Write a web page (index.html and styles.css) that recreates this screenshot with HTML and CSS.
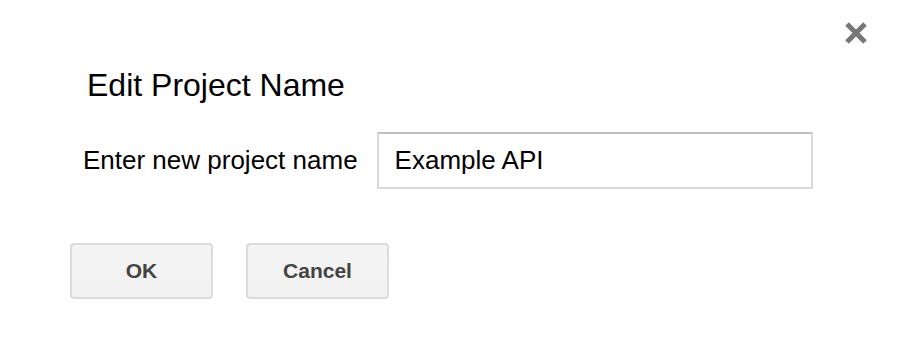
FILE: index.html
```html
<!DOCTYPE html>
<html lang="en">
<head>
  <meta charset="UTF-8" />
  <title>Edit Project Name</title>
  <link rel="stylesheet" href="styles.css">
</head>
<body>
  <div class="dialog">
    <button class="close" type="button" aria-label="Close">
      <svg width="24" height="24" viewBox="0 0 24 24">
        <path d="M3 3L21 21M21 3L3 21" stroke="#777" stroke-width="5" stroke-linecap="butt"/>
      </svg>
    </button>

    <h2 class="title">Edit Project Name</h2>

    <div class="row">
      <label for="projName">Enter new project name</label>
      <input type="text" id="projName" value="Example API">
    </div>

    <div class="actions">
      <button type="button" class="btn">OK</button>
      <button type="button" class="btn">Cancel</button>
    </div>
  </div>
</body>
</html>
```

FILE: styles.css
```css
body {
  margin: 0;
  background: #fff;
  font-family: Arial, "Liberation Sans", sans-serif;
  color: #000;
}
.dialog {
  position: relative;
  width: 898px;
  height: 338px;
  box-sizing: border-box;
  padding: 67px 0 0 70px;
}
.close {
  position: absolute;
  top: 21px;
  left: 844px;
  padding: 0;
  border: 0;
  background: none;
  width: 24px;
  height: 24px;
  cursor: pointer;
}
.close svg {
  display: block;
}
.title {
  margin: 0 0 28px 17px;
  font-size: 32px;
  font-weight: normal;
  line-height: 37px;
}
.row {
  display: flex;
  align-items: center;
  margin-left: 13px;
}
.row label {
  font-size: 26px;
  margin-right: 19px;
}
.row input {
  width: 436px;
  height: 57px;
  box-sizing: border-box;
  border: 2px solid #d9d9d9;
  border-top-color: #c0c0c0;
  padding: 0 16px;
  font-family: inherit;
  font-size: 26px;
  color: #000;
  outline: none;
}
.actions {
  display: flex;
  gap: 33px;
  margin-top: 54px;
}
.btn {
  width: 143px;
  height: 56px;
  border: 2px solid #dcdcdc;
  border-radius: 4px;
  background: linear-gradient(#f5f5f5, #f1f1f1);
  font-family: inherit;
  font-size: 21px;
  font-weight: bold;
  color: #444;
  cursor: pointer;
}
```
